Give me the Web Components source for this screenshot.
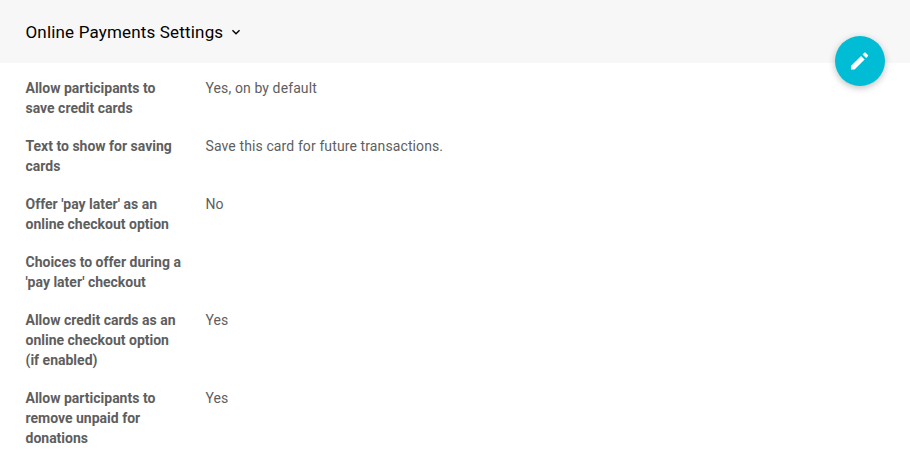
<!DOCTYPE html>
<html lang="en"><head><meta charset="utf-8"><title>Online Payments Settings</title>
<style>body{margin:0;background:#fff;font-family:Roboto,"Liberation Sans",sans-serif;}</style></head>
<body>
<settings-panel heading="Online Payments Settings">
<edit-button slot="action"></edit-button>
<setting-row label="Allow participants to save credit cards">Yes, on by default</setting-row>
<setting-row label="Text to show for saving cards">Save this card for future transactions.</setting-row>
<setting-row label="Offer 'pay later' as an online checkout option">No</setting-row>
<setting-row label="Choices to offer during a 'pay later' checkout"></setting-row>
<setting-row label="Allow credit cards as an online checkout option (if enabled)">Yes</setting-row>
<setting-row label="Allow participants to remove unpaid for donations">Yes</setting-row>
</settings-panel>
<script>
class SettingsPanel extends HTMLElement{
constructor(){super();this.attachShadow({mode:'open'}).innerHTML=`<style>
:host{display:block;height:471px;overflow:hidden;position:relative}
header{display:flex;align-items:center;height:63px;box-sizing:border-box;padding:1px 26px 0 25.5px;background:#f7f7f7;color:#000}
h1{margin:0;font-size:17px;font-weight:400;line-height:24px;letter-spacing:.17px}
svg{width:16px;height:16px;margin-left:5px}
main{display:flex;flex-direction:column;gap:18px;padding:15px 26px 0 25.5px}
::slotted([slot=action]){position:absolute;right:25px;top:36px}
</style><header><h1></h1><svg viewBox="0 0 24 24"><path fill="currentColor" d="M7.41 8.59 12 13.17l4.59-4.58L18 10l-6 6-6-6z"/></svg></header><slot name="action"></slot><main><slot></slot></main>`}
connectedCallback(){this.shadowRoot.querySelector('h1').textContent=this.getAttribute('heading')}
}
class SettingRow extends HTMLElement{
constructor(){super();this.attachShadow({mode:'open'}).innerHTML=`<style>
:host{display:grid;grid-template-columns:160px 1fr;column-gap:20px;font-size:14px;line-height:20px;letter-spacing:.11px;color:#5e5e5e}
.label{font-weight:700;letter-spacing:0}
</style><div class="label"></div><div><slot></slot></div>`}
connectedCallback(){this.shadowRoot.querySelector('.label').textContent=this.getAttribute('label')}
}
class EditButton extends HTMLElement{
constructor(){super();this.attachShadow({mode:'open'}).innerHTML=`<style>
:host{display:block;width:50px;height:50px}
button{display:flex;align-items:center;justify-content:center;width:100%;height:100%;padding:0;border:0;border-radius:50%;background:#00bcd4;color:#fff;box-shadow:0 2px 7px rgba(0,0,0,.26)}
svg{width:24px;height:24px}
</style><button aria-label="Edit"><svg viewBox="-.1 -.56 25.1 25.1"><path fill="currentColor" d="M3 17.25V21h3.75L17.3 10.45l-3.75-3.75L3 17.25zM20.71 7.04a1 1 0 0 0 0-1.41l-2.34-2.34a1 1 0 0 0-1.41 0l-1.83 1.83 3.75 3.75 1.83-1.83z"/></svg></button>`}
}
customElements.define('settings-panel',SettingsPanel);
customElements.define('setting-row',SettingRow);
customElements.define('edit-button',EditButton);
</script></body></html>
